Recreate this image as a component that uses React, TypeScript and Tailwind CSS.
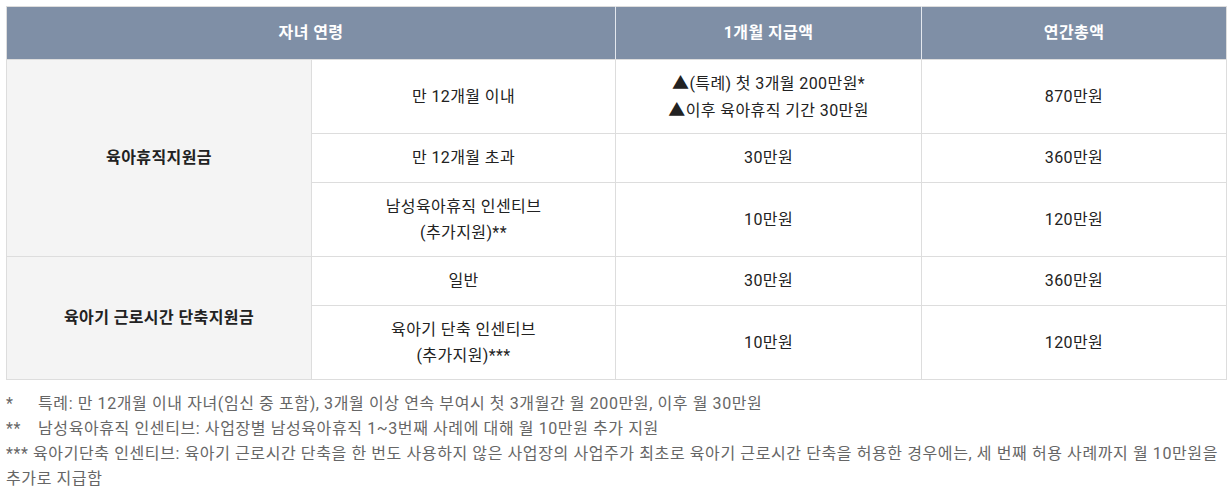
export default function App() {
  const font = { fontFamily: "Roboto, 'Noto Sans CJK KR', sans-serif" };

  const cell = "border border-[#dddddd] text-center align-middle px-2 leading-[26px]";

  return (
    <div className="w-[1230px] h-[495px] bg-white text-[16px] tracking-[0.4px] text-[#222222]" style={font}>
      <div className="pt-[6px] px-[6px]">
        <table className="w-[1220px] border-collapse table-fixed">
          <colgroup>
            <col className="w-[305px]" />
            <col className="w-[304px]" />
            <col className="w-[306px]" />
            <col className="w-[305px]" />
          </colgroup>
          <thead>
            <tr className="h-[53px] bg-[#7f8fa6] text-white font-bold">
              <th colSpan={2} className="border border-[#dddddd] border-r-[#e4e8ee] text-center">
                자녀 연령
              </th>
              <th className="border border-[#dddddd] border-x-[#e4e8ee] text-center">1개월 지급액</th>
              <th className="border border-[#dddddd] border-l-[#e4e8ee] text-center">연간총액</th>
            </tr>
          </thead>
          <tbody>
            <tr className="h-[74px]">
              <td rowSpan={3} className={`${cell} bg-[#f4f4f4] font-bold`}>
                육아휴직지원금
              </td>
              <td className={cell}>만 12개월 이내</td>
              <td className={cell}>
                <span className="text-[17px]">▲</span>(특례) 첫 3개월 200만원*
                <br />
                <span className="text-[17px]">▲</span>이후 육아휴직 기간 30만원
              </td>
              <td className={cell}>870만원</td>
            </tr>
            <tr className="h-[49px]">
              <td className={cell}>만 12개월 초과</td>
              <td className={cell}>30만원</td>
              <td className={cell}>360만원</td>
            </tr>
            <tr className="h-[74px]">
              <td className={cell}>
                남성육아휴직 인센티브
                <br />
                (추가지원)**
              </td>
              <td className={cell}>10만원</td>
              <td className={cell}>120만원</td>
            </tr>
            <tr className="h-[49px]">
              <td rowSpan={2} className={`${cell} bg-[#f4f4f4] font-bold`}>
                육아기 근로시간 단축지원금
              </td>
              <td className={cell}>일반</td>
              <td className={cell}>30만원</td>
              <td className={cell}>360만원</td>
            </tr>
            <tr className="h-[74px]">
              <td className={cell}>
                육아기 단축 인센티브
                <br />
                (추가지원)***
              </td>
              <td className={cell}>10만원</td>
              <td className={cell}>120만원</td>
            </tr>
          </tbody>
        </table>

        <div className="mt-[11px] text-[#666666] leading-[25px] tracking-[0.6px]">
          <div className="flex">
            <span className="w-[32px] shrink-0">*</span>
            <span>특례: 만 12개월 이내 자녀(임신 중 포함), 3개월 이상 연속 부여시 첫 3개월간 월 200만원, 이후 월 30만원</span>
          </div>
          <div className="flex">
            <span className="w-[32px] shrink-0">**</span>
            <span>남성육아휴직 인센티브: 사업장별 남성육아휴직 1~3번째 사례에 대해 월 10만원 추가 지원</span>
          </div>
          <div className="whitespace-nowrap">
            <span className="inline-block w-[27px]">***</span>
            육아기단축 인센티브: 육아기 근로시간 단축을 한 번도 사용하지 않은 사업장의 사업주가 최초로 육아기 근로시간 단축을 허용한 경우에는, 세 번째 허용 사례까지 월 10만원을
            <br />
            추가로 지급함
          </div>
        </div>
      </div>
    </div>
  );
}
